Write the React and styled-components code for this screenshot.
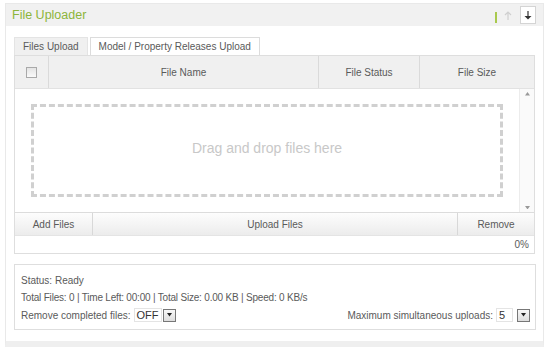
import React from "react";
import styled, { createGlobalStyle } from "styled-components";

const Global = createGlobalStyle`
  body {
    margin: 0;
    background: #fff;
    font-family: "Liberation Sans", Arial, sans-serif;
    font-size: 10px;
    color: #5a5a5a;
  }
`;

const Panel = styled.div`
  margin: 3px 0 0 5px;
  width: 537px;
  border: 1px solid #e9e9e9;
  border-bottom: 6px solid #efefef;
  background: #fff;
`;

const Header = styled.div`
  height: 22px;
  background: #f1f1f1;
  display: flex;
  align-items: center;
  padding: 0 7px 0 6px;
`;

const Title = styled.div`
  flex: 1;
  color: #8db53a;
  font-size: 12.5px;
`;

const GreenMark = styled.span`
  width: 2px;
  height: 11px;
  background: #a9c94d;
  margin-right: 3px;
  margin-top: 4px;
`;

const ArrowBtn = styled.div`
  width: 14px;
  height: 16px;
  display: flex;
  align-items: center;
  justify-content: center;
  margin-left: ${(p) => p.$gap || 0}px;
  background: ${(p) => (p.$boxed ? "#fff" : "transparent")};
  border: 1px solid ${(p) => (p.$boxed ? "#d4d4d4" : "transparent")};
`;

const Body = styled.div`
  padding: 11px 6px 11px 8px;
`;

const Tabs = styled.div`
  display: flex;
  gap: 2px;
  height: 18px;
`;

const Tab = styled.div`
  padding: 0 8px;
  display: flex;
  align-items: center;
  border: 1px solid ${(p) => (p.$active ? "#e4e4e4" : "#dcdcdc")};
  border-bottom: none;
  background: ${(p) => (p.$active ? "#f0f0f0" : "#fff")};
`;

const Grid = styled.div`
  border: 1px solid #dedede;
  width: 519px;
`;

const HeadRow = styled.div`
  display: grid;
  grid-template-columns: 33px 270px 101px 1fr;
  height: 32px;
  background: #f0f0f0;
  border-bottom: 1px solid #e2e2e2;
`;

const HeadCell = styled.div`
  display: flex;
  align-items: center;
  justify-content: center;
  border-left: ${(p) => (p.$first ? "none" : "1px solid #dadada")};
`;

const Check = styled.span`
  width: 9px;
  height: 9px;
  border: 1px solid #a9a9a9;
  background: linear-gradient(#e4e4e4, #fafafa);
`;

const ListArea = styled.div`
  display: flex;
  height: 123px;
`;

const DropWrap = styled.div`
  flex: 1;
  padding: 15px 16px;
`;

const DropZone = styled.div`
  height: 100%;
  border: 3px dashed #d0d0d0;
  display: flex;
  align-items: center;
  justify-content: center;
  color: #c8c8c8;
  font-size: 14px;
  padding-bottom: 6px;
  box-sizing: border-box;
`;

const Scrollbar = styled.div`
  width: 14px;
  border-left: 1px solid #ececec;
  background: #fafafa;
  display: flex;
  flex-direction: column;
  justify-content: space-between;
  align-items: center;
  padding: 3px 0;
`;

const ButtonRow = styled.div`
  display: grid;
  grid-template-columns: 77px 1fr 77px;
  height: 22px;
  background: linear-gradient(#fdfdfd, #ececec);
  border-top: 1px solid #dcdcdc;
  border-bottom: 1px solid #e4e4e4;
`;

const Btn = styled.div`
  display: flex;
  align-items: center;
  justify-content: center;
  border-left: ${(p) => (p.$first ? "none" : "1px solid #d8d8d8")};
`;

const Progress = styled.div`
  height: 17px;
  display: flex;
  align-items: center;
  justify-content: flex-end;
  padding-right: 5px;
`;

const StatusBox = styled.div`
  margin-top: 10px;
  width: 509px;
  border: 1px solid #dedede;
  padding: 9px 5px 7px 6px;
  display: flex;
  flex-direction: column;
  gap: 4px;
`;

const Line = styled.div`
  display: flex;
  align-items: center;
  justify-content: space-between;
  min-height: 13px;
  letter-spacing: ${(p) => p.$tight ? "-0.2px" : "normal"};
`;

const Field = styled.div`
  display: flex;
  align-items: center;
`;

const SelectVal = styled.span`
  margin-left: 3px;
  min-width: ${(p) => p.$w}px;
  height: 12px;
  padding: 0 2px;
  border: 1px solid #e4e4e4;
  background: #fff;
  color: #333;
  font-size: 11px;
  display: flex;
  align-items: center;
`;

const SelectArrow = styled.span`
  margin-left: ${(p) => p.$gap}px;
  width: 11px;
  height: 11px;
  border: 1px solid #777;
  background: linear-gradient(#f8f8f8, #ddd);
  display: flex;
  align-items: center;
  justify-content: center;
`;

const Tri = ({ up, color = "#333", size = 6 }) => (
  <svg width={size} height={size / 2 + 1} viewBox="0 0 6 4">
    <path d={up ? "M0 4 L3 0 L6 4 Z" : "M0 0 L6 0 L3 4 Z"} fill={color} />
  </svg>
);

const Arrow = ({ up, color }) => (
  <svg width="8" height="9" viewBox="0 0 8 9">
    {up ? (
      <path d="M4 1 V9 M1 4 L4 1 L7 4" stroke={color} strokeWidth="1.2" fill="none" />
    ) : (
      <>
        <path d="M4 0 V6" stroke={color} strokeWidth="1.2" />
        <path d="M0.5 5 H7.5 L4 8.5 Z" fill={color} />
      </>
    )}
  </svg>
);

const Select = ({ value, w, gap }) => (
  <>
    <SelectVal $w={w}>{value}</SelectVal>
    <SelectArrow $gap={gap}>
      <Tri color="#222" size={5} />
    </SelectArrow>
  </>
);

export default function App() {
  return (
    <>
      <Global />
      <Panel>
        <Header>
          <Title>File Uploader</Title>
          <GreenMark />
          <ArrowBtn>
            <Arrow up color="#cfcfcf" />
          </ArrowBtn>
          <ArrowBtn $boxed $gap={4}>
            <Arrow color="#333" />
          </ArrowBtn>
        </Header>
        <Body>
          <Tabs>
            <Tab $active>Files Upload</Tab>
            <Tab>Model / Property Releases Upload</Tab>
          </Tabs>
          <Grid>
            <HeadRow>
              <HeadCell $first>
                <Check />
              </HeadCell>
              <HeadCell>File Name</HeadCell>
              <HeadCell>File Status</HeadCell>
              <HeadCell>File Size</HeadCell>
            </HeadRow>
            <ListArea>
              <DropWrap>
                <DropZone>Drag and drop files here</DropZone>
              </DropWrap>
              <Scrollbar>
                <Tri up color="#999" size={5} />
                <Tri color="#999" size={5} />
              </Scrollbar>
            </ListArea>
            <ButtonRow>
              <Btn $first>Add Files</Btn>
              <Btn>Upload Files</Btn>
              <Btn>Remove</Btn>
            </ButtonRow>
            <Progress>0%</Progress>
          </Grid>
          <StatusBox>
            <Line>Status: Ready</Line>
            <Line $tight>Total Files: 0 | Time Left: 00:00 | Total Size: 0.00 KB | Speed: 0 KB/s</Line>
            <Line>
              <Field>
                Remove completed files:
                <Select value="OFF" w={16} gap={1} />
              </Field>
              <Field>
                Maximum simultaneous uploads:
                <Select value="5" w={11} gap={4} />
              </Field>
            </Line>
          </StatusBox>
        </Body>
      </Panel>
    </>
  );
}
